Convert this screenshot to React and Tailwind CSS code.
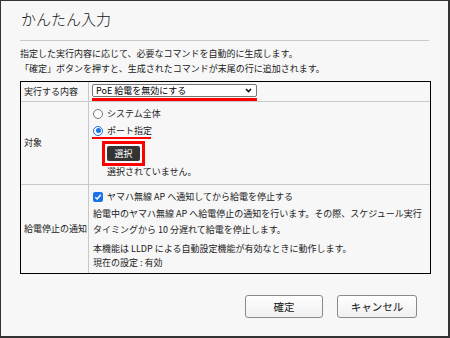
import React from "react";

function Radio({ checked }) {
  return checked ? (
    <span className="w-[10px] h-[10px] rounded-full border-[1.5px] border-[#1a73e8] bg-white flex items-center justify-center shrink-0">
      <span className="w-[5px] h-[5px] rounded-full bg-[#1a73e8]" />
    </span>
  ) : (
    <span className="w-[10px] h-[10px] rounded-full border border-[#777] bg-white shrink-0" />
  );
}

export default function App() {
  return (
    <div
      className="w-[450px] h-[338px] box-border bg-[#f7f7f7] border-t border-l border-r-2 border-b-2 border-[#333] text-[#222] px-[19px] overflow-hidden"
      style={{ fontFamily: '"Noto Sans CJK JP", "Noto Sans", sans-serif' }}
    >
      <div className="h-[40px] box-border border-b border-[#c8c8c8] pt-[8px] pl-[1px] text-[15px] leading-[20px] font-light text-[#111]">
        かんたん入力
      </div>
      <div className="mt-[5px] text-[9px] leading-[15px]">
        <div>指定した実行内容に応じて、必要なコマンドを自動的に生成します。</div>
        <div>「確定」ボタンを押すと、生成されたコマンドが末尾の行に追加されます。</div>
      </div>
      <div className="mt-[5px] w-[411px] box-border border border-black text-[9px]">
        {/* row 1 */}
        <div className="flex border-b border-[#c8c8c8]">
          <div className="w-[68px] shrink-0 border-r border-[#c8c8c8] pl-[3px] flex items-center">
            実行する内容
          </div>
          <div className="pl-[3px] pt-[2px]">
            <div className="w-[165px] h-[13px] box-border bg-white border border-[#777] rounded-[2px] flex items-center justify-between pl-[3px] pr-[4px] text-[9px] leading-none text-black">
              <span>PoE 給電を無効にする</span>
              <svg width="7" height="5" viewBox="0 0 7 5">
                <path d="M1 1 L3.5 3.5 L6 1" stroke="#111" strokeWidth="1.6" fill="none" />
              </svg>
            </div>
            <div className="w-[165px] h-[3px] mt-[1px] bg-[#ff0000]" />
          </div>
        </div>
        {/* row 2 */}
        <div className="flex border-b border-[#c8c8c8]">
          <div className="w-[68px] shrink-0 border-r border-[#c8c8c8] pl-[3px] flex items-center">
            対象
          </div>
          <div className="pl-[4px] pt-[5px] pb-[6px]">
            <div className="h-[14px] flex items-center gap-[4px]">
              <Radio />
              <span>システム全体</span>
            </div>
            <div className="mt-[4px] h-[11px] flex items-center gap-[4px]">
              <Radio checked />
              <span>ポート指定</span>
            </div>
            <div className="w-[59px] h-[2px] mt-[1px] -ml-[1px] bg-[#ff0000]" />
            <div className="ml-[9px] mt-[2px] w-fit border-[3px] border-[#ff0000] p-[2px]">
              <div className="w-[33px] h-[15px] rounded-[2px] bg-[#333] text-white flex items-center justify-center text-[9px] leading-none">
                選択
              </div>
            </div>
            <div className="ml-[14px] h-[12px] leading-[12px]">選択されていません。</div>
          </div>
        </div>
        {/* row 3 */}
        <div className="flex">
          <div className="w-[68px] shrink-0 border-r border-[#c8c8c8] pl-[3px] flex items-center">
            給電停止の通知
          </div>
          <div className="pl-[4px] pt-[5px] pb-[3px]">
            <div className="h-[14px] flex items-center gap-[4px]">
              <span className="w-[10px] h-[10px] rounded-[2px] bg-[#1a73e8] flex items-center justify-center shrink-0">
                <svg width="8" height="8" viewBox="0 0 8 8">
                  <path d="M1.3 4.2 L3.2 6 L6.8 1.8" stroke="#fff" strokeWidth="1.5" fill="none" />
                </svg>
              </span>
              <span>ヤマハ無線 AP へ通知してから給電を停止する</span>
            </div>
            <div className="mt-[2px] leading-[16px]">
              <div>給電中のヤマハ無線 AP へ給電停止の通知を行います。その際、スケジュール実行</div>
              <div>タイミングから 10 分遅れて給電を停止します。</div>
            </div>
            <div className="mt-[4px] leading-[14px]">
              <div>本機能は LLDP による自動設定機能が有効なときに動作します。</div>
              <div>現在の設定 : 有効</div>
            </div>
          </div>
        </div>
      </div>
      <div className="mt-[21px] flex justify-end gap-[14px] pr-[12px]">
        <button className="w-[78px] h-[23px] rounded-[3px] border border-[#8a8a8a] bg-gradient-to-b from-white to-[#f0f0f0] text-[10.5px] text-[#111]">
          確定
        </button>
        <button className="w-[80px] h-[23px] rounded-[3px] border border-[#8a8a8a] bg-gradient-to-b from-white to-[#f0f0f0] text-[10.5px] text-[#111]">
          キャンセル
        </button>
      </div>
    </div>
  );
}
